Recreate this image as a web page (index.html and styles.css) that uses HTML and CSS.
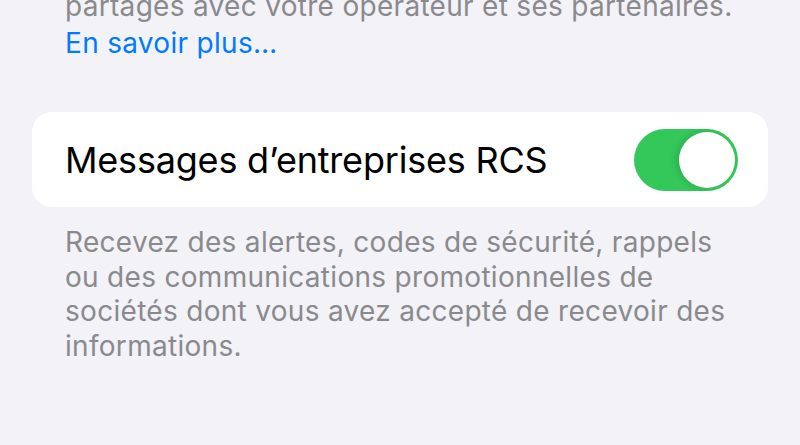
FILE: index.html
```html
<!DOCTYPE html>
<html lang="fr">
<head>
    <meta charset="UTF-8">
    <meta name="viewport" content="width=device-width, initial-scale=1.0">
    <title>Messages</title>
    <link rel="stylesheet" href="styles.css">
</head>
<body>

    <div class="screen">
        <p class="note intro">
            partagés avec votre opérateur et ses partenaires.<br>
            <a class="link" href="#">En savoir plus…</a>
        </p>

        <div class="card">
            <span class="label">Messages d’entreprises RCS</span>
            <div class="toggle on"><div class="knob"></div></div>
        </div>

        <p class="note footer">
            Recevez des alertes, codes de sécurité, rappels<br>
            ou des communications promotionnelles de<br>
            sociétés dont vous avez accepté de recevoir des<br>
            informations.
        </p>
    </div>

</body>
</html>
```

FILE: styles.css
```css
* {
    margin: 0;
    padding: 0;
    box-sizing: border-box;
}
body {
    font-family: Inter, 'Noto Sans', sans-serif;
    background: #f2f2f7;
    color: #000;
    width: 800px;
    height: 445px;
    overflow: hidden;
}
.screen {
    padding: 0 32px;
}
.note {
    font-size: 28px;
    line-height: 37px;
    letter-spacing: 0.3px;
    color: #8a8a8e;
    padding: 0 0 0 33px;
    white-space: nowrap;
}
.intro {
    margin-top: -12px;
}
.link {
    color: #007aff;
    text-decoration: none;
}
.card {
    margin-top: 50px;
    height: 95px;
    background: #fff;
    border-radius: 20px;
    display: flex;
    align-items: center;
    justify-content: space-between;
    padding: 0 30px 0 33px;
}
.label {
    font-size: 36px;
    letter-spacing: -0.2px;
}
.toggle {
    width: 104px;
    height: 62px;
    border-radius: 31px;
    background: #e9e9ea;
    padding: 3px;
    display: flex;
}
.toggle.on {
    background: #34c759;
    justify-content: flex-end;
}
.knob {
    width: 56px;
    height: 56px;
    border-radius: 50%;
    background: #fff;
    box-shadow: -3px 0 6px rgba(0, 0, 0, 0.12);
}
.footer {
    margin-top: 18px;
    line-height: 34.5px;
}
```
